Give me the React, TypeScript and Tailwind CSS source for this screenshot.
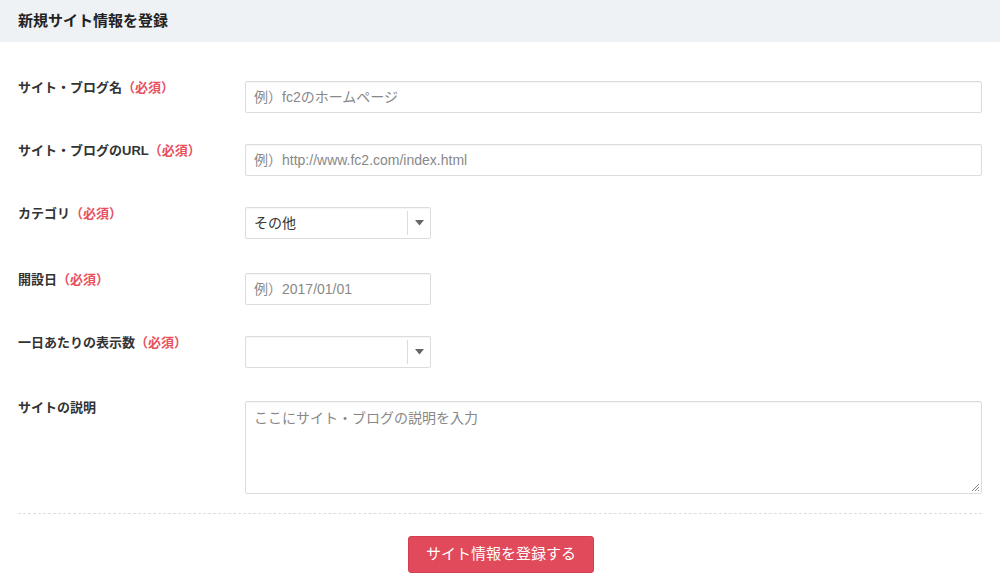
import React from "react";

const font = { fontFamily: '"Liberation Sans", "Noto Sans CJK JP", "Noto Sans", sans-serif' };

function Label({ text, required }: { text: string; required?: boolean }) {
  return (
    <div className="w-[227px] shrink-0 text-[13px] leading-[14px] font-bold text-[#333]">
      {text}
      {required && <span className="text-[#e8505e]">（必須）</span>}
    </div>
  );
}

function Select({ value }: { value: string }) {
  return (
    <div className="w-[186px] h-[32px] border border-[#dcdcdc] rounded-[2px] bg-white flex items-center shadow-[inset_0_1px_1px_rgba(0,0,0,0.04)]">
      <div className="flex-1 px-[8px] text-[14px] text-[#333]">{value}</div>
      <div className="w-px h-[24px] bg-[#dcdcdc]" />
      <div className="w-[22px] flex justify-center">
        <svg width="9" height="6" viewBox="0 0 9 6">
          <path d="M0 0 L9 0 L4.5 5.5 Z" fill="#666" />
        </svg>
      </div>
    </div>
  );
}

function Input({ placeholder, w }: { placeholder: string; w?: string }) {
  return (
    <div
      className={`${w ?? "flex-1"} h-[32px] border border-[#dcdcdc] rounded-[2px] bg-white flex items-center px-[8px] text-[14px] text-[#888] shadow-[inset_0_1px_1px_rgba(0,0,0,0.04)]`}
    >
      {placeholder}
    </div>
  );
}

export default function App() {
  return (
    <div className="w-[1000px] h-[584px] bg-white overflow-hidden" style={font}>
      <div className="h-[42px] bg-[#eef2f5] flex items-center px-[18px] text-[15px] font-bold text-[#222]">
        新規サイト情報を登録
      </div>
      <div className="px-[18px] pt-[39px]">
        <div className="flex">
          <Label text="サイト・ブログ名" required />
          <Input placeholder="例）fc2のホームページ" />
        </div>
        <div className="flex mt-[31px]">
          <Label text="サイト・ブログのURL" required />
          <Input placeholder="例）http://www.fc2.com/index.html" />
        </div>
        <div className="flex mt-[31px]">
          <Label text="カテゴリ" required />
          <Select value="その他" />
        </div>
        <div className="flex mt-[34px]">
          <Label text="開設日" required />
          <Input placeholder="例）2017/01/01" w="w-[186px]" />
        </div>
        <div className="flex mt-[31px]">
          <Label text="一日あたりの表示数" required />
          <Select value="" />
        </div>
        <div className="flex mt-[33px]">
          <Label text="サイトの説明" />
          <div className="relative flex-1 h-[93px] border border-[#dcdcdc] rounded-[2px] bg-white px-[8px] pt-[6px] text-[14px] text-[#888] shadow-[inset_0_1px_1px_rgba(0,0,0,0.04)]">
            ここにサイト・ブログの説明を入力
            <svg className="absolute right-[1px] bottom-[1px]" width="9" height="9" viewBox="0 0 9 9">
              <path d="M8 1 L1 8 M8 4 L4 8 M8 7 L7 8" stroke="#888" strokeWidth="1" />
            </svg>
          </div>
        </div>
        <div className="mt-[19px] border-t border-dashed border-[#dddddd]" />
        <div className="flex justify-center mt-[22px] pl-[2px]">
          <div className="w-[186px] h-[37px] rounded-[3px] bg-[#e04a5a] border border-[#d33f50] flex items-center justify-center text-white text-[15px]">
            サイト情報を登録する
          </div>
        </div>
      </div>
    </div>
  );
}
